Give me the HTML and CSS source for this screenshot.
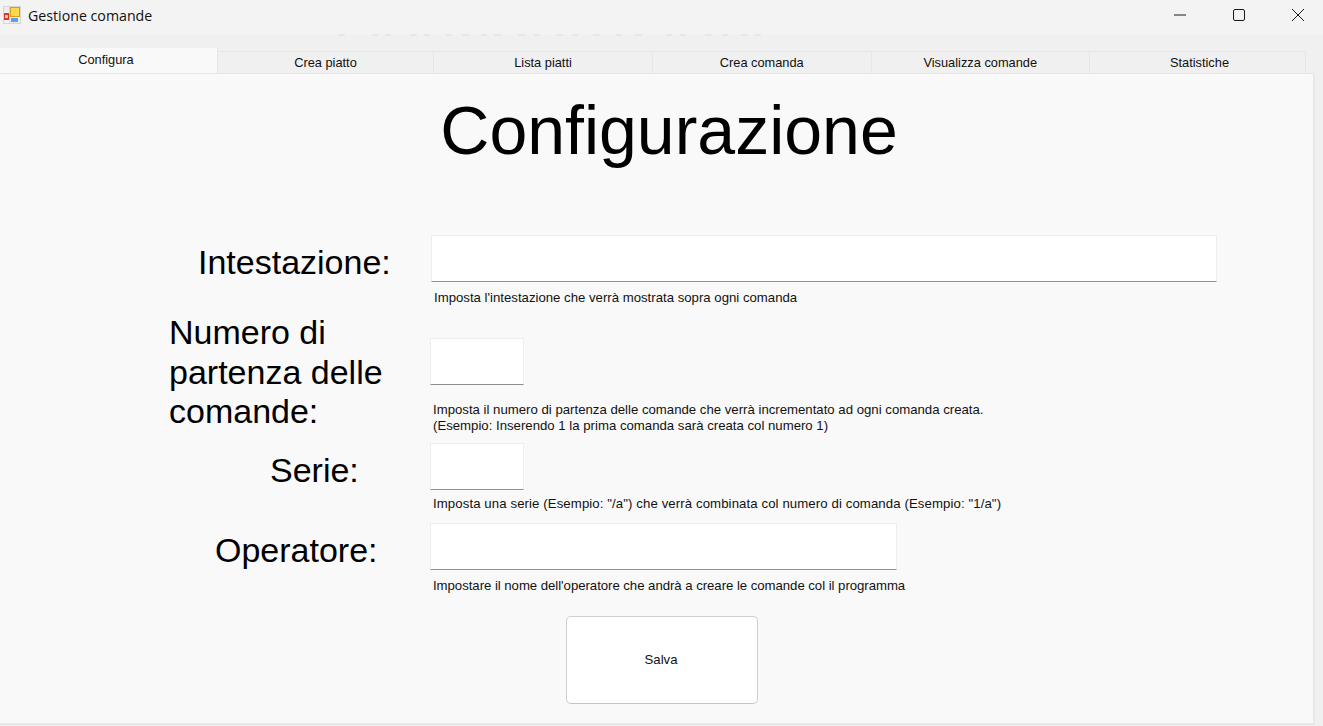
FILE: index.html
```html
<!DOCTYPE html>
<html lang="en">
<head>
    <meta charset="UTF-8">
    <title>Gestione comande</title>
    <link rel="stylesheet" href="styles.css">
</head>
<body>

    <div class="window">
        <!-- Title bar -->
        <div class="titlebar">
            <svg class="app-icon" width="18" height="18" viewBox="0 0 18 18">
                <rect x="0" y="0" width="18" height="18" fill="#d6d6d6"/>
                <rect x="1" y="1" width="5" height="5" fill="#ececec"/>
                <rect x="1" y="6" width="5" height="11" fill="#f4f4f4"/>
                <rect x="1" y="7" width="5" height="7" fill="#d8382e"/>
                <rect x="2" y="9" width="3" height="3" fill="#f4c4b8"/>
                <rect x="7" y="1" width="10" height="10" fill="#d9a016"/>
                <rect x="8" y="2" width="8" height="8" fill="#fbd84e"/>
                <rect x="7" y="11" width="10" height="6" fill="#eeeeee"/>
                <rect x="8" y="12" width="7" height="4" fill="#5f9fe6"/>
            </svg>
            <span class="app-title">Gestione comande</span>
            <div class="window-buttons">
                <svg width="14" height="14" viewBox="0 0 14 14"><path d="M1 7H13" stroke="#1a1a1a" fill="none"/></svg>
                <svg width="14" height="14" viewBox="0 0 14 14"><rect x="1.5" y="1.5" width="11" height="11" rx="1.5" stroke="#1a1a1a" fill="none"/></svg>
                <svg width="14" height="14" viewBox="0 0 14 14"><path d="M1 1L13 13M13 1L1 13" stroke="#1a1a1a" fill="none"/></svg>
            </div>
            <!-- leftover marks along the bottom of the title bar -->
            <svg class="ghost-marks" width="430" height="2" viewBox="0 0 430 2">
                <path d="M0 1h7M34 1h6M47 1h6M72 1h7M86 1h6M108 1h6M124 1h7M143 1h6M156 1h7M180 1h7M196 1h6M218 1h7M234 1h6M255 1h7M278 1h6M297 1h7M328 1h6M342 1h6M367 1h7M384 1h6M403 1h7M417 1h6" stroke="#dcdcdc" fill="none"/>
            </svg>
        </div>

        <!-- Tabs -->
        <div class="tabs">
            <div class="tab active">Configura</div>
            <div class="tab w1">Crea piatto</div>
            <div class="tab w2">Lista piatti</div>
            <div class="tab w3">Crea comanda</div>
            <div class="tab w3">Visualizza comande</div>
            <div class="tab w1 last">Statistiche</div>
        </div>

        <!-- Config page -->
        <div class="panel">
            <h1 class="title">Configurazione</h1>

            <div class="row row-head">
                <label class="label label-head">Intestazione:</label>
                <div class="field">
                    <input type="text" class="input input-head">
                    <p class="hint hint-head">Imposta l'intestazione che verrà mostrata sopra ogni comanda</p>
                </div>
            </div>

            <div class="row row-number">
                <label class="label label-number">Numero di partenza delle comande:</label>
                <div class="field field-number">
                    <input type="text" class="input input-small">
                    <p class="hint hint-number">Imposta il numero di partenza delle comande che verrà incrementato ad ogni comanda creata.<br>(Esempio: Inserendo 1 la prima comanda sarà creata col numero 1)</p>
                </div>
            </div>

            <div class="row row-serie">
                <label class="label label-serie">Serie:</label>
                <div class="field">
                    <input type="text" class="input input-small">
                    <p class="hint hint-serie">Imposta una serie (Esempio: "/a") che verrà combinata col numero di comanda (Esempio: "1/a")</p>
                </div>
            </div>

            <div class="row row-operator">
                <label class="label label-operator">Operatore:</label>
                <div class="field">
                    <input type="text" class="input input-operator">
                    <p class="hint hint-operator">Impostare il nome dell'operatore che andrà a creare le comande col il programma</p>
                </div>
            </div>

            <button class="save">Salva</button>
        </div>
    </div>

</body>
</html>
```

FILE: styles.css
```css
body {
    margin: 0;
    font-family: "Liberation Sans", Arial, sans-serif;
    background-color: #f0f0f0;
    color: #000;
    overflow: hidden;
}
.window {
    width: 1323px;
    height: 726px;
}

/* Title bar */
.titlebar {
    position: relative;
    display: flex;
    align-items: center;
    height: 35px;
    padding-bottom: 5px;
    box-sizing: border-box;
    padding-left: 3px;
    background-color: #f3f3f3;
}
.app-icon {
    margin-right: 7px;
}
.app-title {
    font-family: "Open Sans", sans-serif;
    font-size: 14.2px;
    color: #111;
}
.window-buttons {
    display: flex;
    gap: 45px;
    margin-left: auto;
    margin-right: 18px;
}
.ghost-marks {
    position: absolute;
    left: 338px;
    top: 34px;
}

/* Tabs */
.tabs {
    display: flex;
    align-items: flex-end;
    height: 38px;
    padding-right: 17px;
}
.tab {
    box-sizing: border-box;
    height: 22px;
    line-height: 22px;
    text-align: center;
    font-size: 12.8px;
    color: #111;
    background-color: #f0f0f0;
    border: 1px solid #e6e6e6;
    border-bottom: none;
    border-left: none;
}
.tab.w1 {
    width: 216px;
}
.tab.w2 {
    width: 219px;
}
.tab.w3 {
    width: 218.5px;
}
.tab.last {
    padding-left: 4px;
}
.tab.active {
    width: 218px;
    height: 25px;
    line-height: 24px;
    padding-right: 5px;
    background-color: #f9f9f9;
    border: none;
    border-right: 1px solid #e6e6e6;
}

/* Page */
.panel {
    box-sizing: border-box;
    width: 1315px;
    height: 652px;
    padding-top: 1px;
    background-color: #f9f9f9;
    border-top: 1px solid #e6e6e6;
    border-right: 2px solid #e8e8e8;
    border-bottom: 2px solid #e8e8e8;
}
.title {
    margin: 0 0 64px 25px;
    height: 96px;
    line-height: 110px;
    font-size: 68px;
    font-weight: normal;
    text-align: center;
}
.row {
    display: grid;
    grid-template-columns: 430px 1fr;
}
.row-number {
    margin-top: 7px;
}
.row-serie {
    margin-top: 9px;
}
.row-operator {
    margin-top: 11px;
}
.label {
    font-size: 34px;
    line-height: 54px;
}
.label-head {
    padding-left: 198px;
}
.label-number {
    padding-left: 169px;
    padding-right: 30px;
    line-height: 39.5px;
}
.label-serie {
    padding-left: 270px;
}
.label-operator {
    padding-left: 215px;
}
.field-number {
    padding-top: 25px;
}
.input {
    display: block;
    box-sizing: border-box;
    height: 47px;
    padding: 0;
    background-color: #fff;
    border: 1px solid #eeeeee;
    border-bottom: 1px solid #8f8f8f;
    outline: none;
}
.input-head {
    width: 786px;
    margin-left: 1px;
}
.input-small {
    width: 94px;
}
.input-operator {
    width: 467px;
}
.hint {
    margin: 0 0 0 3px;
    font-size: 13.2px;
    line-height: 16px;
    color: #111;
}
.hint-head {
    margin-top: 8px;
    margin-left: 4px;
}
.hint-number {
    margin-top: 17px;
}
.hint-serie {
    margin-top: 6px;
    letter-spacing: 0.1px;
}
.hint-operator {
    margin-top: 8px;
    letter-spacing: -0.04px;
}
.save {
    display: block;
    width: 192px;
    height: 88px;
    margin: 22px 0 0 566px;
    padding: 0 2px 2px 0;
    background-color: #fff;
    border: 1px solid #cfcfcf;
    border-bottom-color: #c4c4c4;
    border-radius: 5px;
    font-family: "Liberation Sans", Arial, sans-serif;
    font-size: 13.2px;
    color: #111;
}
```
